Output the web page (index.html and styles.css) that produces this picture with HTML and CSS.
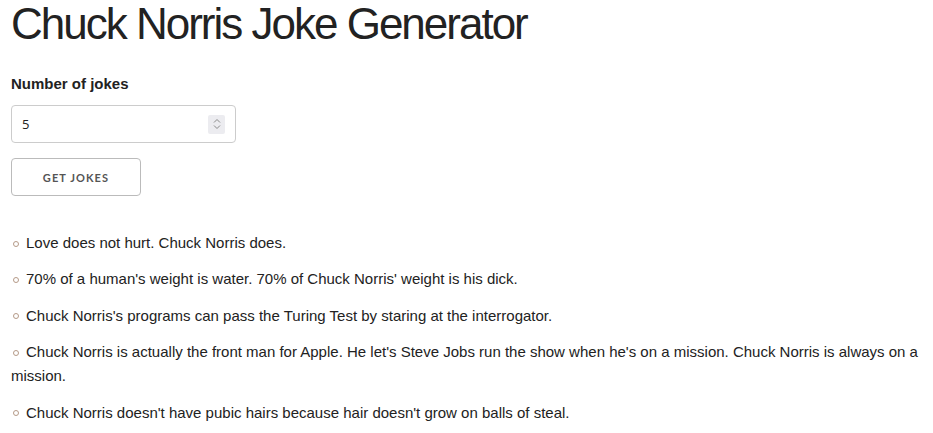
FILE: index.html
```html
<!DOCTYPE html>
<html lang="en">
<head>
<meta charset="utf-8">
<title>Chuck Norris Joke Generator</title>
<link rel="stylesheet" href="styles.css">
</head>
<body>
<main class="app">
  <h1 class="title">Chuck Norris Joke Generator</h1>
  <form class="form">
    <label class="label" for="count">Number of jokes</label>
    <div class="number-input">
      <span class="number-value" id="count">5</span>
      <span class="spinner">
        <svg width="10" height="14" viewBox="0 0 10 14" aria-hidden="true">
          <path d="M2 5.5 L5 2.5 L8 5.5" fill="none" stroke="#8a8a8a" stroke-width="1"/>
          <path d="M2 8.5 L5 11.5 L8 8.5" fill="none" stroke="#8a8a8a" stroke-width="1"/>
        </svg>
      </span>
    </div>
    <button type="button" class="button">Get jokes</button>
  </form>
  <ul class="jokes">
    <li class="joke"><span class="bullet"></span>Love does not hurt. Chuck Norris does.</li>
    <li class="joke"><span class="bullet"></span>70% of a human's weight is water. 70% of Chuck Norris' weight is his dick.</li>
    <li class="joke"><span class="bullet"></span>Chuck Norris's programs can pass the Turing Test by staring at the interrogator.</li>
    <li class="joke"><span class="bullet"></span>Chuck Norris is actually the front man for Apple. He let's Steve Jobs run the show when he's on a mission. Chuck Norris is always on a mission.</li>
    <li class="joke"><span class="bullet"></span>Chuck Norris doesn't have pubic hairs because hair doesn't grow on balls of steal.</li>
  </ul>
</main>
</body>
</html>
```
FILE: styles.css
```css
html, body {
  margin: 0;
  padding: 0;
  background: #ffffff;
}

body {
  font-family: "Liberation Sans", Arial, sans-serif;
  color: #222222;
}

.app {
  padding: 0 11px;
}

.title {
  margin: 0;
  font-size: 44px;
  line-height: 48px;
  font-weight: 400;
  letter-spacing: -2px;
  color: #222222;
}

.form {
  display: flex;
  flex-direction: column;
  align-items: flex-start;
  margin-top: 27px;
}

.label {
  font-size: 15px;
  font-weight: 700;
  line-height: 18px;
  color: #222222;
}

.number-input {
  margin-top: 12px;
  box-sizing: border-box;
  width: 225px;
  height: 38px;
  border: 1px solid #cccccc;
  border-radius: 4px;
  display: flex;
  align-items: center;
  justify-content: space-between;
  padding: 0 10px 0 10px;
}

.number-value {
  font-family: "Open Sans", sans-serif;
  font-size: 13px;
  color: #222222;
}

.spinner {
  width: 17px;
  height: 19px;
  background: #ececf0;
  border-radius: 2px;
  display: flex;
  align-items: center;
  justify-content: center;
}

.button {
  margin-top: 15px;
  box-sizing: border-box;
  width: 130px;
  height: 38px;
  background: #ffffff;
  border: 1px solid #bbbbbb;
  border-radius: 4px;
  font-family: "Lato", sans-serif;
  font-size: 11px;
  font-weight: 700;
  letter-spacing: 1.1px;
  text-transform: uppercase;
  color: #555555;
  padding: 0;
}

.jokes {
  list-style: none;
  margin: 35px 0 0 0;
  padding: 0;
}

.joke {
  font-size: 15px;
  line-height: 24px;
  margin-bottom: 12.4px;
  color: #222222;
}

.bullet {
  display: inline-block;
  box-sizing: border-box;
  width: 6px;
  height: 6px;
  border: 1px solid #b59a88;
  border-radius: 50%;
  margin: 0 7px 1px 2px;
  vertical-align: middle;
}
```
